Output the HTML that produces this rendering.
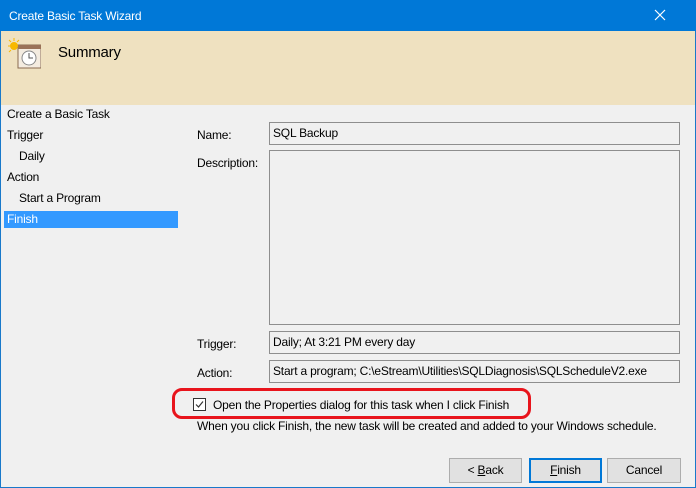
<!DOCTYPE html>
<html><head><style>
body{margin:0;width:696px;height:488px;overflow:hidden;font-family:"Liberation Sans",sans-serif;font-size:12px;color:#000;letter-spacing:-0.2px;}
.win{position:absolute;left:0;top:0;width:694px;height:487px;border:1px solid #1979ca;border-top:none;background:#f0f0f0;}
.title{position:absolute;left:0;top:0;width:696px;height:31px;background:#0078d7;color:#fff;}
.t{position:absolute;white-space:nowrap;}
.hdr{position:absolute;left:1px;top:31px;width:694px;height:74px;background:#efe1c0;}
.box{position:absolute;background:#f0f0f0;border:1px solid #8e8e8e;box-sizing:border-box;padding:3px 3px;white-space:nowrap;}
.btn{position:absolute;height:25px;box-sizing:border-box;border:1px solid #adadad;background:#e1e1e1;text-align:center;line-height:23px;}
</style></head><body>
<div class="win"></div>
<div class="title">
<div class="t" style="left:9px;top:9px;font-size:12px;">Create Basic Task Wizard</div>
<svg class="t" style="left:653px;top:8px" width="14" height="14"><path d="M2 2L12 12M12 2L2 12" stroke="#fff" stroke-width="1.2"/></svg>
</div>
<div class="hdr">
<svg class="t" style="left:6px;top:6px" width="34" height="32">
<rect x="11" y="8" width="23" height="23" fill="#f4ece0" stroke="#8a6a50"/>
<rect x="11" y="8" width="23" height="4" fill="#9a7258"/>
<circle cx="22" cy="21" r="7" fill="#fff" stroke="#888"/>
<path d="M22 16V21H26" stroke="#555" fill="none"/>
<circle cx="7" cy="9" r="4" fill="#f7b800"/>
<path d="M7 1V4M1 9H4M2 3L4 5M12 3L10 5M2 15L4 13" stroke="#f7b800"/>
</svg>
<div class="t" style="left:57px;top:13px;font-size:15px;">Summary</div>
</div>
<div class="t" style="left:4px;top:211px;width:174px;height:17px;background:#3399ff;"></div>
<div class="t" style="left:7px;top:107px">Create a Basic Task</div>
<div class="t" style="left:7px;top:128px">Trigger</div>
<div class="t" style="left:19px;top:149px">Daily</div>
<div class="t" style="left:7px;top:170px">Action</div>
<div class="t" style="left:19px;top:191px">Start a Program</div>
<div class="t" style="left:7px;top:212px;color:#fff">Finish</div>
<div class="t" style="left:197px;top:128px">Name:</div>
<div class="t" style="left:197px;top:156px">Description:</div>
<div class="t" style="left:197px;top:337px">Trigger:</div>
<div class="t" style="left:197px;top:366px">Action:</div>
<div class="box" style="left:269px;top:122px;width:411px;height:23px">SQL Backup</div>
<div class="box" style="left:269px;top:150px;width:411px;height:175px"></div>
<div class="box" style="left:269px;top:331px;width:411px;height:23px">Daily; At 3:21 PM every day</div>
<div class="box" style="left:269px;top:360px;width:411px;height:23px">Start a program; C:\eStream\Utilities\SQLDiagnosis\SQLScheduleV2.exe</div>
<div class="t" style="left:172px;top:388px;width:359px;height:31px;border:3px solid #e8141c;border-radius:10px;box-sizing:border-box;"></div>
<svg class="t" style="left:193px;top:398px" width="13" height="13"><rect x="0.5" y="0.5" width="12" height="12" fill="#fff" stroke="#333"/><path d="M3 6.5L5.5 9L10 3.5" stroke="#333" fill="none" stroke-width="1.2"/></svg>
<div class="t" style="left:213px;top:398px">Open the Properties dialog for this task when I click Finish</div>
<div class="t" style="left:197px;top:419px">When you click Finish, the new task will be created and added to your Windows schedule.</div>
<div class="btn" style="left:449px;top:458px;width:73px">&lt; <u>B</u>ack</div>
<div class="btn" style="left:529px;top:458px;width:73px;border:2px solid #0078d7;line-height:21px"><u>F</u>inish</div>
<div class="btn" style="left:607px;top:458px;width:74px">Cancel</div>
</body></html>
